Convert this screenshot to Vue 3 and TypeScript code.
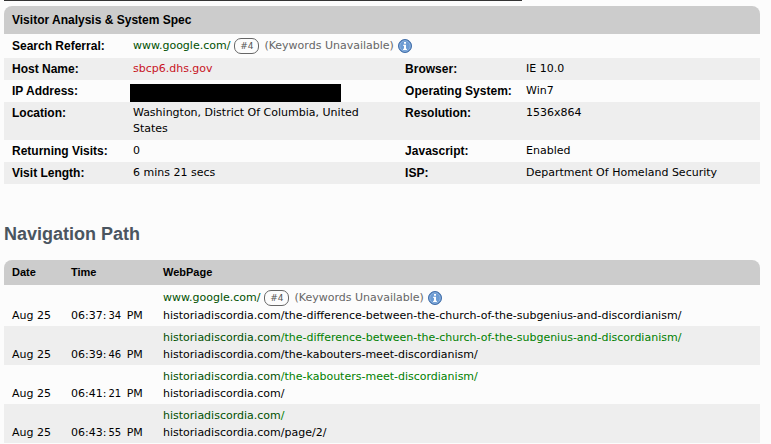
<script setup lang="ts">
import { h } from 'vue'
import type { FunctionalComponent } from 'vue'

interface SpecRow {
  label: string
  value: string
  kind?: 'search' | 'host' | 'redacted'
  label2?: string
  value2?: string
}

interface Visit {
  date: string
  time: string
  seconds: string
  from?: { domain: string; path: string }
  page: string
}

const specs: SpecRow[] = [
  { label: 'Search Referral:', value: 'www.google.com/', kind: 'search' },
  { label: 'Host Name:', value: 'sbcp6.dhs.gov', kind: 'host', label2: 'Browser:', value2: 'IE 10.0' },
  { label: 'IP Address:', value: '', kind: 'redacted', label2: 'Operating System:', value2: 'Win7' },
  { label: 'Location:', value: 'Washington, District Of Columbia, United States', label2: 'Resolution:', value2: '1536x864' },
  { label: 'Returning Visits:', value: '0', label2: 'Javascript:', value2: 'Enabled' },
  { label: 'Visit Length:', value: '6 mins 21 secs', label2: 'ISP:', value2: 'Department Of Homeland Security' },
]

const site = 'historiadiscordia.com'
const subgenius = '/the-difference-between-the-church-of-the-subgenius-and-discordianism/'
const kabouters = '/the-kabouters-meet-discordianism/'

const visits: Visit[] = [
  { date: 'Aug 25', time: '06:37:', seconds: '34', page: site + subgenius },
  { date: 'Aug 25', time: '06:39:', seconds: '46', from: { domain: site, path: subgenius }, page: site + kabouters },
  { date: 'Aug 25', time: '06:41:', seconds: '21', from: { domain: site, path: kabouters }, page: site + '/' },
  { date: 'Aug 25', time: '06:43:', seconds: '55', from: { domain: site, path: '/' }, page: site + '/page/2/' },
]

const Referral: FunctionalComponent = () =>
  h('div', { class: 'referral' }, [
    h('a', { class: 'source', href: '#' }, 'www.google.com/'),
    h('span', { class: 'rank' }, '#4'),
    h('span', { class: 'keywords' }, '(Keywords Unavailable)'),
    h('button', { class: 'info', type: 'button', 'aria-label': 'Info' }, [
      h('svg', { viewBox: '0 0 14 14', width: 14, height: 14 }, [
        h('circle', { cx: 7, cy: 7, r: 6.5, fill: '#4a7ab8', stroke: '#426fa9' }),
        h('circle', { cx: 7, cy: 7, r: 5.3, fill: '#6c9bd3', stroke: '#9dbfe6', 'stroke-width': 0.8 }),
        h('path', { d: 'M6 3h2v1.7H6zM5.2 5.8H8v4h.9v1.1H5.1V9.8H6V6.9h-.8z', fill: '#fff' }),
      ]),
    ]),
  ])
</script>

<template>
  <main class="page">
    <hr class="rule" />
    <table class="grid specs">
      <colgroup>
        <col class="label-col" /><col class="value-col" /><col class="label-col" /><col />
      </colgroup>
      <thead>
        <tr><th colspan="4">Visitor Analysis &amp; System Spec</th></tr>
      </thead>
      <tbody>
        <tr v-for="row in specs" :key="row.label" :class="row.kind">
          <th scope="row">{{ row.label }}</th>
          <td v-if="row.kind === 'search'" colspan="3"><Referral /></td>
          <template v-else>
            <td v-if="row.kind === 'redacted'" class="cover"><span class="bar"></span></td>
            <td v-else-if="row.kind === 'host'"><a class="host-link" href="#">{{ row.value }}</a></td>
            <td v-else>{{ row.value }}</td>
            <th scope="row">{{ row.label2 }}</th>
            <td>{{ row.value2 }}</td>
          </template>
        </tr>
      </tbody>
    </table>

    <h2>Navigation Path</h2>

    <table class="grid path">
      <colgroup>
        <col class="date-col" /><col class="time-col" /><col />
      </colgroup>
      <thead>
        <tr><th>Date</th><th>Time</th><th>WebPage</th></tr>
      </thead>
      <tbody>
        <tr v-for="v in visits" :key="v.seconds">
          <td>{{ v.date }}</td>
          <td>{{ v.time }}<span class="seconds">{{ v.seconds }}</span> PM</td>
          <td>
            <a v-if="v.from" class="from" href="#"><span class="domain">{{ v.from.domain }}</span>{{ v.from.path }}</a>
            <Referral v-else />
            <a class="target" href="#">{{ v.page }}</a>
          </td>
        </tr>
      </tbody>
    </table>
  </main>
</template>

<style>
body {
  background: #fcfcfc;
}
</style>

<style scoped>
.page {
  padding: 0 11px 0 4px;
  font: 11px/16px Verdana, "DejaVu Sans", sans-serif;
  color: #000;
}
.rule {
  width: 518px;
  max-width: 100%;
  height: 1px;
  margin: 0 0 5px;
  border: 0;
  background: #333;
}
.grid {
  width: 100%;
  border-collapse: separate;
  border-spacing: 0;
  table-layout: fixed;
}
.grid th,
.grid td {
  padding: 3px 8px;
  text-align: left;
  vertical-align: top;
}
.grid th {
  font-family: Arial, "Liberation Sans", sans-serif;
  font-weight: bold;
  font-size: 12px;
  white-space: nowrap;
}
.grid thead th {
  padding: 6px 8px;
  background: #ccc;
}
.grid thead th:first-child {
  border-top-left-radius: 8px;
}
.grid thead th:last-child {
  border-top-right-radius: 8px;
}
.grid tbody tr:nth-child(even) {
  background: #eee;
}
.label-col {
  width: 16%;
}
.value-col {
  width: 36%;
}
.grid .search th,
.grid .search td {
  padding-top: 4px;
  padding-bottom: 4px;
}
.grid tbody td.cover {
  padding: 4px 5px 0;
}
.bar {
  display: block;
  width: 211px;
  height: 18px;
  background: #000;
}
a {
  color: inherit;
  text-decoration: none;
}
.host-link {
  color: #c8141e;
}
h2 {
  margin: 38px 0 14px;
  font: bold 18px/24px Arial, "Liberation Sans", sans-serif;
  color: #4a5560;
}
.date-col {
  width: 59px;
}
.time-col {
  width: 92px;
}
.grid.path thead th {
  padding: 4px 8px;
  font-size: 11px;
  line-height: 17px;
}
.grid.path tbody td {
  padding: 3px 8px 2px;
  line-height: 17px;
  vertical-align: bottom;
  white-space: nowrap;
}
.seconds {
  padding: 0 2px;
  font-size: 10px;
}
.from,
.target {
  display: block;
}
.from {
  color: #008000;
}
.domain {
  color: #005000;
}
:deep(.referral) {
  display: flex;
  align-items: center;
  height: 16px;
}
.path :deep(.referral) {
  height: 19px;
}
:deep(.source) {
  color: #005000;
  text-decoration: none;
}
:deep(.rank) {
  box-sizing: border-box;
  width: 25px;
  height: 16px;
  margin: 0 5px 0 4px;
  border: 1px solid #666;
  border-radius: 7px;
  font-size: 9px;
  line-height: 15px;
  text-align: center;
  color: #555;
}
:deep(.keywords) {
  color: #666;
}
:deep(.info) {
  width: 14px;
  height: 14px;
  margin: 0 0 0 4px;
  padding: 0;
  border: 0;
  background: none;
}
:deep(.info svg) {
  display: block;
}
</style>
